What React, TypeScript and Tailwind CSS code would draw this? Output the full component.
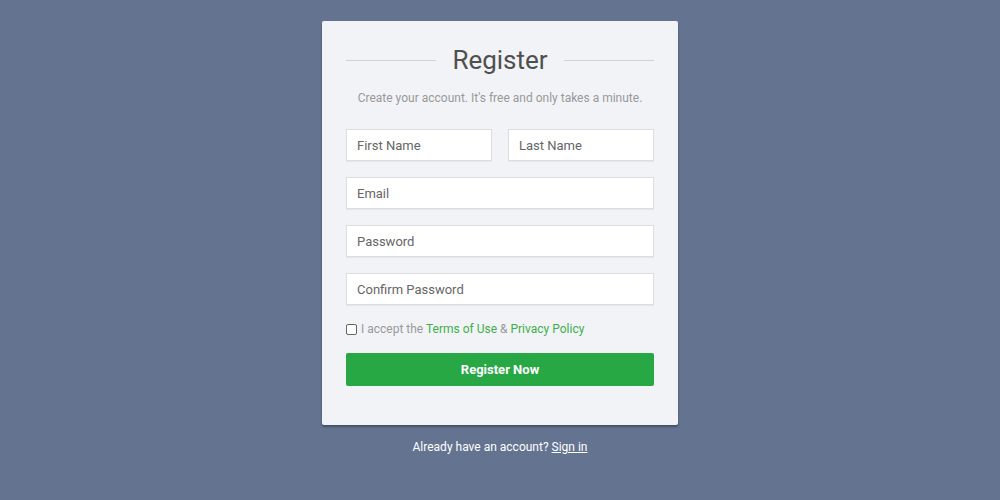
const inputCls =
  "h-8 w-full border border-[#dcdde2] bg-white px-[10px] text-[13px] text-[#555] placeholder:text-[#666] outline-none shadow-[0_1px_1px_rgba(0,0,0,0.04)]";

const App = () => {
  return (
    <div className="min-h-[500px] w-full bg-[#637390] pt-[21px] font-['Roboto',sans-serif]">
      <div className="mx-auto w-[356px]">
        <form className="h-[404px] rounded-[2px] bg-[#f2f3f7] px-6 pt-[23px] shadow-[0_2px_2px_rgba(0,0,0,0.3)]">
          <div className="flex items-center gap-4">
            <div className="h-px flex-1 bg-[#cfd1d6]" />
            <h2 className="text-[26px] leading-[32px] text-[#4f4f4f]">Register</h2>
            <div className="h-px flex-1 bg-[#cfd1d6]" />
          </div>
          <p className="mt-[13px] text-center text-[12px] text-[#999]">
            Create your account. It's free and only takes a minute.
          </p>
          <div className="mt-[22px] flex flex-col gap-4">
            <div className="flex gap-4">
              <input className={inputCls} placeholder="First Name" />
              <input className={inputCls} placeholder="Last Name" />
            </div>
            <input className={inputCls} placeholder="Email" />
            <input className={inputCls} placeholder="Password" />
            <input className={inputCls} placeholder="Confirm Password" />
          </div>
          <label className="mt-[15px] flex items-center gap-[4px] text-[12px] text-[#999]">
            <span className="h-[11px] w-[11px] rounded-[2px] border border-[#666] bg-white" />
            <span>
              I accept the <a className="text-[#3fae4c]">Terms of Use</a> &amp;{" "}
              <a className="text-[#3fae4c]">Privacy Policy</a>
            </span>
          </label>
          <button
            type="button"
            className="mt-[15px] h-[33px] w-full rounded-[2px] bg-[#28a745] text-[13px] font-bold text-white"
          >
            Register Now
          </button>
        </form>
        <p className="mt-[13px] text-center text-[12px] text-white">
          Already have an account? <a className="underline">Sign in</a>
        </p>
      </div>
    </div>
  );
};

export default App;
